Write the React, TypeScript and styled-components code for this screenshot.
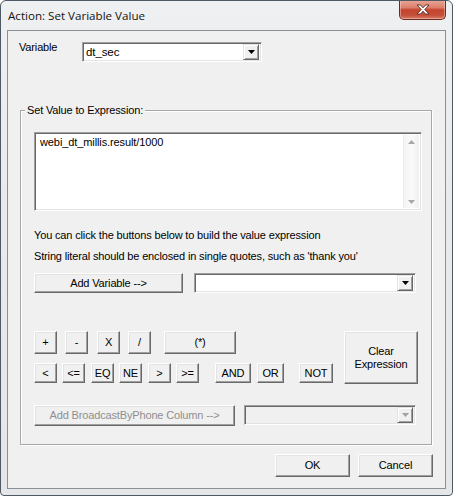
import React from "react";
import styled, { createGlobalStyle } from "styled-components";

const GlobalStyle = createGlobalStyle`
  html, body { margin: 0; padding: 0; background: #ffffff; }
  body {
    font-family: "Liberation Sans", Arial, sans-serif;
    font-size: 11px;
    letter-spacing: -0.15px;
    color: #000;
  }
  * { box-sizing: border-box; }
`;

const Window = styled.div`
  width: 453px;
  height: 496px;
  border: 1px solid #4f5966;
  border-radius: 6px 6px 4px 4px;
  background: linear-gradient(180deg, #eff0f1 0%, #e9eaec 40%, #e4e6e8 100%);
  padding: 0 6px 6px;
  display: flex;
  flex-direction: column;
  overflow: hidden;
`;

const TitleBar = styled.div`
  height: 29px;
  display: flex;
  align-items: flex-start;
  justify-content: space-between;
`;

const Title = styled.div`
  font-family: "Open Sans", "Liberation Sans", sans-serif;
  font-size: 11.6px;
  letter-spacing: 0;
  line-height: 29px;
  padding-left: 1px;
  color: #141414;
`;

const CloseButton = styled.div`
  width: 47px;
  height: 20px;
  margin-top: -1px;
  border: 1px solid #6b2a20;
  border-top: none;
  border-radius: 0 0 5px 5px;
  background: linear-gradient(180deg, #e8a898 0%, #dc806c 40%, #c5432c 52%, #c4503a 80%, #d67a62 100%);
  box-shadow: inset 0 0 0 1px rgba(255, 220, 210, 0.45);
  display: flex;
  align-items: center;
  justify-content: center;
`;

const Client = styled.div`
  flex: 1;
  border: 1px solid #8b9097;
  background: #f0f0f0;
  display: flex;
  flex-direction: column;
`;

const VariableRow = styled.div`
  display: flex;
  align-items: flex-start;
  margin: 11px 0 0 11px;
`;

const FieldLabel = styled.div`
  width: 63px;
  line-height: 13px;
  margin-top: -1px;
`;

const Combo = styled.div<{ $w: number; $disabled?: boolean }>`
  width: ${(p) => p.$w}px;
  height: 20px;
  border: 1px solid;
  border-color: #a0a0a0 #ffffff #ffffff #a0a0a0;
  box-shadow: inset 1px 1px 0 #696969, inset -1px -1px 0 #e3e3e3;
  background: ${(p) => (p.$disabled ? "#f0f0f0" : "#ffffff")};
  display: flex;
  align-items: center;
  padding: 2px 2px 2px 3px;
  flex-shrink: 0;
`;

const ComboText = styled.div`
  flex: 1;
  line-height: 13px;
  font-size: 11.5px;
  letter-spacing: -0.1px;
`;

const DropButton = styled.div`
  width: 16px;
  height: 16px;
  border: 1px solid;
  border-color: #e3e3e3 #696969 #696969 #e3e3e3;
  box-shadow: inset 1px 1px 0 #ffffff, inset -1px -1px 0 #a0a0a0;
  background: #f0f0f0;
  display: flex;
  align-items: center;
  justify-content: center;
`;

const GroupBox = styled.div`
  position: relative;
  margin: 48px 13px 0 12px;
  height: 335px;
  border: 1px solid #a7a7a7;
  box-shadow: 1px 1px 0 #ffffff, inset 1px 1px 0 #ffffff;
  padding: 21px 9px 0 13px;
  display: flex;
  flex-direction: column;
`;

const Legend = styled.div`
  position: absolute;
  top: -7px;
  left: 4px;
  padding: 0 2px;
  background: #f0f0f0;
  line-height: 13px;
`;

const TextArea = styled.div`
  width: 388px;
  height: 79px;
  border: 1px solid;
  border-color: #a0a0a0 #ffffff #ffffff #a0a0a0;
  box-shadow: inset 1px 1px 0 #696969, inset -1px -1px 0 #e3e3e3;
  background: #ffffff;
  display: flex;
  padding: 2px;
`;

const AreaText = styled.div`
  flex: 1;
  padding: 1px 0 0 3px;
  line-height: 13px;
  font-size: 11px;
  letter-spacing: -0.1px;
`;

const ScrollTrack = styled.div`
  width: 16px;
  background: linear-gradient(90deg, #f3f3f3, #fafafa 50%, #f0f0f0);
  border-left: 1px solid #ececec;
  display: flex;
  flex-direction: column;
  justify-content: space-between;
  align-items: center;
  padding: 5px 0 4px;
`;

const Hints = styled.div`
  margin-top: 14px;
  line-height: 21px;
`;

const Row = styled.div<{ $mt: number }>`
  display: flex;
  align-items: flex-start;
  margin-top: ${(p) => p.$mt}px;
`;

const Btn = styled.div<{ $w: number; $h?: number; $ml?: number; $disabled?: boolean }>`
  width: ${(p) => p.$w}px;
  height: ${(p) => p.$h ?? 23}px;
  margin-left: ${(p) => p.$ml ?? 0}px;
  flex-shrink: 0;
  border: 1px solid;
  border-color: #ffffff #696969 #696969 #ffffff;
  box-shadow: inset -1px -1px 0 #a0a0a0, inset 1px 1px 0 #e3e3e3;
  background: #f0f0f0;
  color: ${(p) => (p.$disabled ? "#8f8f8f" : "#000000")};
  display: flex;
  align-items: center;
  justify-content: center;
  text-align: center;
  line-height: 13px;
  font-size: 11px;
  white-space: pre-line;
`;

const OpArea = styled.div`
  display: flex;
  align-items: flex-start;
  margin-top: 38px;
`;

const OpColumn = styled.div`
  display: flex;
  flex-direction: column;
  gap: 9px;
`;

const OpRow = styled.div`
  display: flex;
`;

const Footer = styled.div`
  display: flex;
  justify-content: flex-end;
  gap: 8px;
  margin: 9px 12px 0 0;
`;

const Arrow = ({ color = "#000" }: { color?: string }) => (
  <svg width="7" height="4" viewBox="0 0 7 4">
    <path d="M0 0h7L3.5 4z" fill={color} />
  </svg>
);

const ScrollArrow = ({ up }: { up?: boolean }) => (
  <svg width="7" height="4" viewBox="0 0 7 4">
    <path d={up ? "M0 4h7L3.5 0z" : "M0 0h7L3.5 4z"} fill="#a6a6a6" />
  </svg>
);

const CloseGlyph = () => (
  <svg width="14" height="11" viewBox="0 0 14 11">
    <path
      d="M1 1h3.5L7 3.8 9.5 1H13L8.8 5.5 13 10H9.5L7 7.2 4.5 10H1l4.2-4.5z"
      fill="#ffffff"
      stroke="#5a2a22"
      strokeWidth="0.9"
      strokeLinejoin="round"
    />
  </svg>
);

export default function App() {
  return (
    <>
      <GlobalStyle />
      <Window>
        <TitleBar>
          <Title>Action: Set Variable Value</Title>
          <CloseButton>
            <CloseGlyph />
          </CloseButton>
        </TitleBar>
        <Client>
          <VariableRow>
            <FieldLabel>Variable</FieldLabel>
            <Combo $w={180}>
              <ComboText>dt_sec</ComboText>
              <DropButton>
                <Arrow />
              </DropButton>
            </Combo>
          </VariableRow>

          <GroupBox>
            <Legend>Set Value to Expression:</Legend>
            <TextArea>
              <AreaText>webi_dt_millis.result/1000</AreaText>
              <ScrollTrack>
                <ScrollArrow up />
                <ScrollArrow />
              </ScrollTrack>
            </TextArea>

            <Hints>
              <div>You can click the buttons below to build the value expression</div>
              <div>String literal should be enclosed in single quotes, such as 'thank you'</div>
            </Hints>

            <Row $mt={6}>
              <Btn $w={149} $h={20}>Add Variable --&gt;</Btn>
              <Combo $w={222} style={{ marginLeft: 11 }}>
                <ComboText />
                <DropButton>
                  <Arrow />
                </DropButton>
              </Combo>
            </Row>

            <OpArea>
              <OpColumn>
                <OpRow>
                  <Btn $w={23}>+</Btn>
                  <Btn $w={23} $ml={8}>-</Btn>
                  <Btn $w={23} $ml={9}>X</Btn>
                  <Btn $w={23} $ml={8}>/</Btn>
                  <Btn $w={72} $ml={13}>(*)</Btn>
                </OpRow>
                <OpRow>
                  <Btn $w={23} $h={20}>&lt;</Btn>
                  <Btn $w={23} $h={20} $ml={5}>&lt;=</Btn>
                  <Btn $w={23} $h={20} $ml={6}>EQ</Btn>
                  <Btn $w={23} $h={20} $ml={5}>NE</Btn>
                  <Btn $w={23} $h={20} $ml={6}>&gt;</Btn>
                  <Btn $w={23} $h={20} $ml={5}>&gt;=</Btn>
                  <Btn $w={36} $h={20} $ml={16}>AND</Btn>
                  <Btn $w={27} $h={20} $ml={6}>OR</Btn>
                  <Btn $w={34} $h={20} $ml={15}>NOT</Btn>
                </OpRow>
              </OpColumn>
              <Btn $w={74} $h={53} $ml={11}>{"Clear\nExpression"}</Btn>
            </OpArea>

            <Row $mt={21}>
              <Btn $w={201} $h={21} $disabled>Add BroadcastByPhone Column --&gt;</Btn>
              <Combo $w={172} $disabled style={{ marginLeft: 9 }}>
                <ComboText />
                <DropButton>
                  <Arrow color="#a0a0a0" />
                </DropButton>
              </Combo>
            </Row>
          </GroupBox>

          <Footer>
            <Btn $w={75}>OK</Btn>
            <Btn $w={75}>Cancel</Btn>
          </Footer>
        </Client>
      </Window>
    </>
  );
}
